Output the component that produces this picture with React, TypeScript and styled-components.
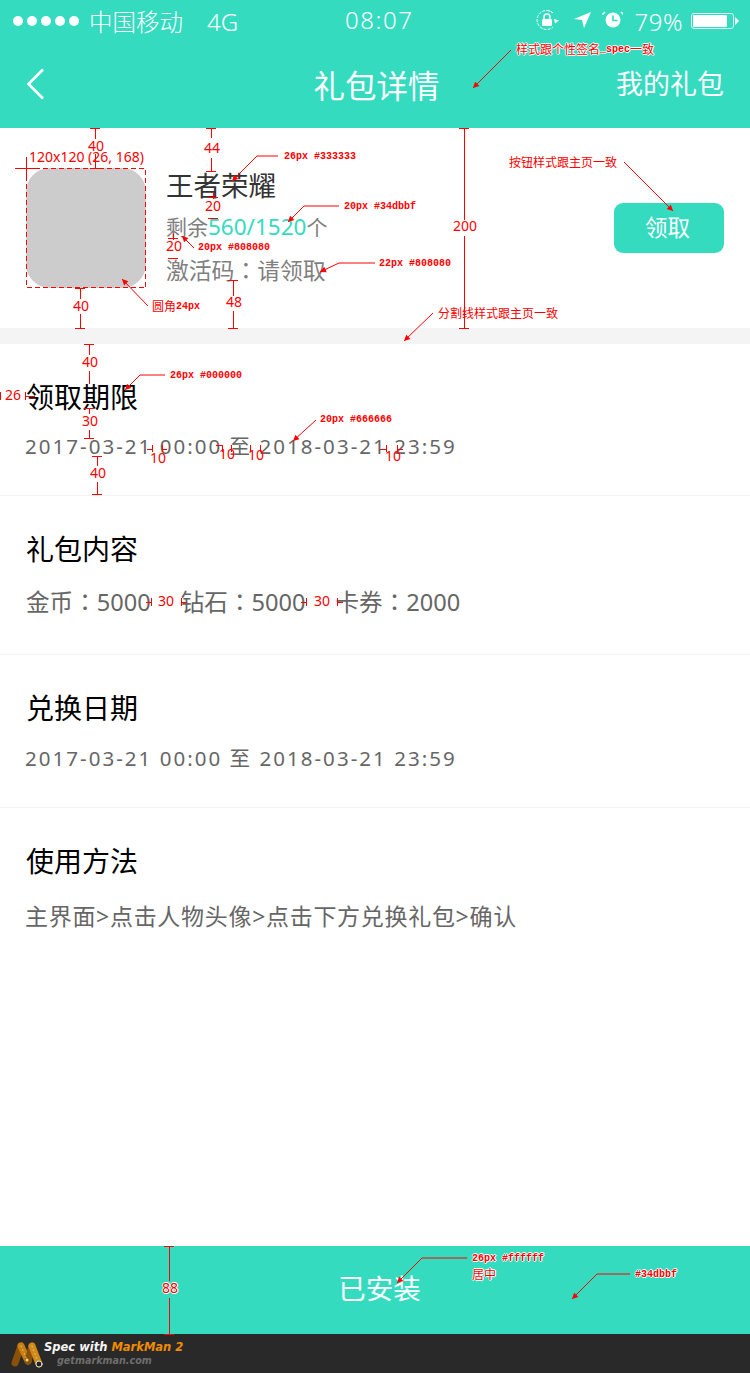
import React from "react";
import styled, { createGlobalStyle } from "styled-components";

const Global = createGlobalStyle`
  html, body { margin: 0; padding: 0; background: #fff; }
  body { font-family: "Noto Sans CJK SC", "Noto Sans", sans-serif; }
`;
const TEAL = "#34dbbf";
const CJK = `"Noto Sans", "Noto Sans CJK SC", sans-serif`;

const Page = styled.div`
  position: relative; width: 750px; height: 1373px; overflow: hidden;
  display: flex; flex-direction: column; font-family: ${CJK}; background: #fff;
`;
const Header = styled.header`height: 128px; background: ${TEAL}; color: #fff; display: flex; flex-direction: column;`;
const StatusBar = styled.div`
  height: 42px; display: flex; align-items: center; justify-content: space-between;
  padding: 0 16px 0 13px; font-size: 24px; font-weight: 300; position: relative;
`;
const StatusGroup = styled.div`display: flex; align-items: center;`;
const Dots = styled.div`display: flex; gap: 4px; margin-right: 10px;`;
const Dot = styled.span`width: 10px; height: 10px; border-radius: 50%; background: #fff;`;
const Carrier = styled.span`margin-right: 24px; font-size: 23.5px;`;
const Clock = styled.span`position: absolute; left: 345px; top: 3px; letter-spacing: 1.6px;`;
const Percent = styled.span`letter-spacing: 0.5px;`;
const StatusIcons = styled.svg`margin-right: 12px;`;
const Battery = styled.div`
  width: 43px; height: 16px; border: 1px solid #d8f8f2; border-radius: 3px; padding: 1px; box-sizing: border-box;
  margin-left: 8px; position: relative;
  &::before { content: ""; display: block; height: 100%; width: 34px; background: #fff; border-radius: 1px; }
  &::after { content: ""; position: absolute; right: -6px; top: 3px; border-left: 4px solid #fff; border-top: 4px solid transparent; border-bottom: 4px solid transparent; }
`;
const Nav = styled.div`flex: 1; display: flex; align-items: center; justify-content: space-between; padding: 0 26px 2px; position: relative;`;
const NavTitle = styled.div`position: absolute; inset: 0 0 2px 3px; display: flex; align-items: center; justify-content: center; font-size: 31.5px;`;
const NavLink = styled.div`font-size: 27px; line-height: 40px;`;

const Hero = styled.section`height: 200px; display: flex; align-items: center; padding: 0 26px; box-sizing: border-box;`;
const Thumb = styled.div`width: 120px; height: 120px; border-radius: 24px; background: #cccccc; flex: none;`;
const Info = styled.div`margin-left: 20px; flex: 1; display: flex; flex-direction: column;`;
const GameName = styled.div`font-size: 27.5px; line-height: 30px; color: #333;`;
const Remain = styled.div`font-size: 21px; line-height: 26px; color: #808080; margin-top: 13px;`;
const Accent = styled.span`color: ${TEAL}; font-size: 22.5px;`;
const Code = styled.div`font-size: 22.8px; line-height: 30px; color: #808080; margin-top: 15px;`;
const ClaimButton = styled.div`
  width: 110px; height: 50px; border-radius: 9px; background: ${TEAL}; color: #fff; font-size: 22.5px;
  display: flex; align-items: center; justify-content: center; box-sizing: border-box; padding: 0 3px 4px 0;
`;
const Divider = styled.div`height: 16px; background: #f4f4f4;`;
const Colon = styled.span`font-family: "Noto Sans CJK TC", sans-serif;`;

const Section = styled.section<{ $h: number; $gap: number }>`
  height: ${(p) => p.$h}px; box-sizing: border-box; padding: 39px 25px 0; border-bottom: 1px solid #f2f2f2;
  display: flex; flex-direction: column; gap: ${(p) => p.$gap}px;
`;
const Last = styled(Section)`border-bottom: none;`;
const SectionTitle = styled.div`font-size: 28px; line-height: 28px; color: #000; padding-left: 1px;`;
const DateText = styled.div`font-size: 20.5px; line-height: 24px; color: #666; letter-spacing: 2.03px; white-space: pre;`;
const Body = styled.div`font-size: 23px; line-height: 24px; color: #666; white-space: pre;`;
const Steps = styled(Body)`letter-spacing: .7px;`;
const Rewards = styled.div`display: flex; gap: 30px; padding-left: 1px;`;
const Reward = styled(Body)`font-size: 23.6px;`;
const Grow = styled.div`flex: 1;`;
const BottomBar = styled.div`
  height: 88px; background: ${TEAL}; color: #fff; font-size: 27.5px; display: flex; align-items: center; justify-content: center;
  box-sizing: border-box; padding: 0 0 6px 9px;
`;
const Marker = styled.div`height: 39px; background: #292929; display: flex; align-items: center; padding-left: 11px; gap: 1px;`;
const MarkerText = styled.div`display: flex; flex-direction: column; font-family: "DejaVu Sans", sans-serif; font-style: italic; font-weight: 700; line-height: 14px;`;
const MarkerTop = styled.div`font-size: 11.5px; color: #f4f4f4; white-space: pre;`;
const Orange = styled.span`color: #f08c00;`;
const MarkerSub = styled.div`font-size: 9.6px; color: #6e6e6e; margin-left: 13px;`;

const Overlay = styled.svg`position: absolute; inset: 0; width: 750px; height: 1373px; pointer-events: none;`;
const Stroke = styled.g`shape-rendering: crispEdges;`;
type Kind = "num" | "spec" | "cn" | "halo" | "haloCn" | "haloNum";
const Note = styled.div<{ $kind: Kind }>`
  position: absolute; color: #f00; white-space: pre; line-height: 1;
  font-size: ${(p) => (p.$kind === "num" || p.$kind === "haloNum" ? 14 : p.$kind === "cn" || p.$kind === "haloCn" ? 12 : 10)}px;
  font-family: ${(p) =>
    p.$kind === "num" || p.$kind === "haloNum"
      ? `"Noto Sans", sans-serif`
      : p.$kind === "cn" || p.$kind === "haloCn"
        ? `"Noto Sans CJK SC", sans-serif`
        : `"Liberation Mono", "Noto Sans CJK SC", monospace`};
  font-weight: ${(p) => (p.$kind === "spec" || p.$kind === "halo" ? 700 : 400)};
  text-shadow: ${(p) => (p.$kind.startsWith("halo") ? "1px 0 #fff,-1px 0 #fff,0 1px #fff,0 -1px #fff" : "none")};
`;

type N = { t: string; x: number; y: number; k: Kind };
const notes: N[] = [
  { t: "样式跟个性签名", x: 516, y: 43, k: "haloCn" },
  { t: "_spec", x: 600, y: 45, k: "halo" },
  { t: "一致", x: 630, y: 43, k: "haloCn" },
  { t: "40", x: 88, y: 139, k: "num" },
  { t: "44", x: 204, y: 141, k: "num" },
  { t: "120x120 (26, 168)", x: 29, y: 150, k: "num" },
  { t: "26px #333333", x: 284, y: 152, k: "spec" },
  { t: "按钮样式跟主页一致", x: 509, y: 156, k: "cn" },
  { t: "20", x: 205, y: 199, k: "num" },
  { t: "20px #34dbbf", x: 344, y: 202, k: "spec" },
  { t: "200", x: 453, y: 219, k: "num" },
  { t: "20", x: 166, y: 239, k: "num" },
  { t: "20px #808080", x: 198, y: 243, k: "spec" },
  { t: "22px #808080", x: 379, y: 259, k: "spec" },
  { t: "48", x: 226, y: 295, k: "num" },
  { t: "40", x: 73, y: 299, k: "num" },
  { t: "圆角", x: 152, y: 300, k: "cn" },
  { t: "24px", x: 176, y: 302, k: "spec" },
  { t: "分割线样式跟主页一致", x: 438, y: 307, k: "cn" },
  { t: "40", x: 82, y: 355, k: "num" },
  { t: "26px #000000", x: 170, y: 371, k: "spec" },
  { t: "26", x: 5, y: 388, k: "num" },
  { t: "20px #666666", x: 320, y: 415, k: "spec" },
  { t: "30", x: 82, y: 414, k: "num" },
  { t: "10", x: 150, y: 451, k: "num" },
  { t: "10", x: 219, y: 447, k: "num" },
  { t: "10", x: 248, y: 448, k: "num" },
  { t: "10", x: 385, y: 449, k: "num" },
  { t: "40", x: 90, y: 466, k: "num" },
  { t: "30", x: 158, y: 594, k: "num" },
  { t: "30", x: 314, y: 594, k: "num" },
  { t: "88", x: 162, y: 1281, k: "haloNum" },
  { t: "26px #ffffff", x: 472, y: 1254, k: "halo" },
  { t: "居中", x: 472, y: 1268, k: "haloCn" },
  { t: "#34dbbf", x: 635, y: 1270, k: "halo" },
];

type L = [number, number, number, number];
const lines: L[] = [
  [95, 128, 95, 139], [95, 154, 95, 168], [90, 128, 100, 128], [90, 168, 100, 168], [15, 168, 40, 168], [26, 157, 26, 180],
  [211, 128, 211, 138], [211, 158, 211, 171], [206, 171, 216, 171], [206, 128, 216, 128],
  [213, 192, 213, 199], [208, 197, 218, 197], [208, 218, 218, 218],
  [173, 234, 173, 240], [168, 238, 178, 238], [168, 258, 178, 258],
  [464, 128, 464, 220], [464, 236, 464, 328], [459, 128, 469, 128], [459, 328, 469, 328],
  [233, 280, 233, 296], [233, 311, 233, 328], [228, 280, 238, 280], [228, 328, 238, 328],
  [80, 288, 80, 299], [80, 314, 80, 328], [75, 288, 85, 288], [75, 328, 85, 328],
  [89, 344, 89, 355], [89, 371, 89, 384], [84, 344, 94, 344],
  [0, 392, 0, 400], [25, 392, 25, 400], [25, 396, 35, 396],
  [89, 408, 89, 414], [89, 430, 89, 438], [84, 438, 94, 438], [84, 408, 94, 408],
  [97, 456, 97, 466], [97, 482, 97, 494], [92, 494, 102, 494], [92, 456, 102, 456],
  [152, 445, 152, 452], [162, 445, 162, 452], [147, 449, 152, 449], [162, 449, 167, 449],
  [222, 445, 222, 452], [231, 445, 231, 452], [216, 445, 222, 445],
  [250, 445, 250, 452], [260, 445, 260, 452],
  [386, 445, 386, 452], [397, 445, 397, 452], [380, 449, 386, 449], [397, 449, 403, 449],
  [151, 598, 151, 606], [146, 602, 151, 602], [181, 598, 181, 606], [181, 602, 187, 602],
  [306, 598, 306, 606], [301, 602, 306, 602], [337, 598, 337, 606], [337, 602, 343, 602],
  [169, 1246, 169, 1281], [169, 1298, 169, 1334], [164, 1246, 174, 1246], [164, 1334, 174, 1334],
];
const arrows: { p: string; tip: [number, number]; from: [number, number] }[] = [
  { p: "511,50 473,88", tip: [473, 88], from: [511, 50] },
  { p: "278,156 257,156 232,181", tip: [232, 181], from: [257, 156] },
  { p: "339,206 304,206 288,222", tip: [288, 222], from: [304, 206] },
  { p: "194,248 182,236", tip: [182, 236], from: [194, 248] },
  { p: "375,263 339,263 320,272", tip: [320, 272], from: [339, 263] },
  { p: "148,306 122,279", tip: [122, 279], from: [148, 306] },
  { p: "624,162 673,211", tip: [673, 211], from: [624, 162] },
  { p: "433,313 404,341", tip: [404, 341], from: [433, 313] },
  { p: "165,375 140,375 125,390", tip: [125, 390], from: [140, 375] },
  { p: "316,420 293,441", tip: [293, 441], from: [316, 420] },
  { p: "467,1258 422,1258 397,1283", tip: [397, 1283], from: [422, 1258] },
  { p: "630,1274 597,1274 572,1299", tip: [572, 1299], from: [597, 1274] },
];

function head(tip: [number, number], from: [number, number]) {
  const a = Math.atan2(tip[1] - from[1], tip[0] - from[0]);
  const pt = (d: number, o: number) => `${tip[0] - d * Math.cos(a) + o * Math.sin(a)},${tip[1] - d * Math.sin(a) - o * Math.cos(a)}`;
  return `${tip[0]},${tip[1]} ${pt(6, 3)} ${pt(6, -3)}`;
}

const Logo = () => (
  <svg width="32" height="28" viewBox="0 0 32 28" fill="none" strokeLinecap="round">
    <path d="M4 23 L10 6" stroke="#8a5208" strokeWidth="7" />
    <path d="M10 6 L17 21" stroke="#c77f14" strokeWidth="7" />
    <path d="M17 21 L21 6" stroke="#8a5208" strokeWidth="7" />
    <path d="M21 6 L28 24" stroke="#d18a1a" strokeWidth="7" />
    <path d="M10 6 L16 20 M21 6 L27 22" stroke="#f3c46a" strokeWidth="1" strokeDasharray="1 3" />
    <circle cx="16" cy="20" r="1.5" fill="#f7d98a" />
    <circle cx="28" cy="24" r="3" fill="#222" stroke="#ddd" strokeWidth="1" />
  </svg>
);

const Status = () => (
  <StatusIcons width="94" height="26" viewBox="0 0 94 26" fill="none">
    <path d="M24 5 A9.5 9.5 0 1 0 24 19" stroke="#fff" strokeWidth="1" strokeDasharray="3 1.2" />
    <path d="M18 2.5 A9.5 9.5 0 0 1 24 5" stroke="#fff" strokeWidth="1" strokeDasharray="3 1.2" />
    <rect x="13" y="11" width="10" height="7" rx="1" fill="#fff" />
    <path d="M15 11 V9 a3 3 0 0 1 6 0 V11" stroke="#fff" strokeWidth="1.4" />
    <path d="M25 11 l5 1.5 -4 3z" fill="#fff" />
    <path d="M45 11 L62 4 L55 20 L53 12z" fill="#fff" />
    <circle cx="84" cy="12" r="7.5" fill="#fff" />
    <path d="M84 7.5 V12.5 H88.5" stroke={TEAL} strokeWidth="1.6" />
    <path d="M76 4 l-2.5 2.5 M92 4 l2.5 2.5" stroke="#fff" strokeWidth="1.6" />
  </StatusIcons>
);

const DATE = "2017-03-21 00:00 至 2018-03-21 23:59";

export default function App() {
  return (
    <Page>
      <Global />
      <Header>
        <StatusBar>
          <StatusGroup>
            <Dots>{[0, 1, 2, 3, 4].map((i) => <Dot key={i} />)}</Dots>
            <Carrier>中国移动</Carrier>
            <span>4G</span>
          </StatusGroup>
          <Clock>08:07</Clock>
          <StatusGroup>
            <Status />
            <Percent>79%</Percent>
            <Battery />
          </StatusGroup>
        </StatusBar>
        <Nav>
          <svg width="20" height="32" viewBox="0 0 20 32" fill="none">
            <path d="M17 1.5 L2.5 16 L17 30.5" stroke="#fff" strokeWidth="2.6" />
          </svg>
          <NavTitle>礼包详情</NavTitle>
          <NavLink>我的礼包</NavLink>
        </Nav>
      </Header>
      <Hero>
        <Thumb />
        <Info>
          <GameName>王者荣耀</GameName>
          <Remain>剩余<Accent>560/1520</Accent>个</Remain>
          <Code>激活码<Colon>：</Colon>请领取</Code>
        </Info>
        <ClaimButton>领取</ClaimButton>
      </Hero>
      <Divider />
      <Section $h={152} $gap={23}>
        <SectionTitle>领取期限</SectionTitle>
        <DateText>{DATE}</DateText>
      </Section>
      <Section $h={159} $gap={26}>
        <SectionTitle>礼包内容</SectionTitle>
        <Rewards>
          <Reward>金币<Colon>：</Colon>5000</Reward>
          <Reward>钻石<Colon>：</Colon>5000</Reward>
          <Reward>卡券<Colon>：</Colon>2000</Reward>
        </Rewards>
      </Section>
      <Section $h={153} $gap={24}>
        <SectionTitle>兑换日期</SectionTitle>
        <DateText>{DATE}</DateText>
      </Section>
      <Last $h={100} $gap={29}>
        <SectionTitle>使用方法</SectionTitle>
        <Steps>主界面&gt;点击人物头像&gt;点击下方兑换礼包&gt;确认</Steps>
      </Last>
      <Grow />
      <BottomBar>已安装</BottomBar>
      <Marker>
        <Logo />
        <MarkerText>
          <MarkerTop>Spec with <Orange>MarkMan 2</Orange></MarkerTop>
          <MarkerSub>getmarkman.com</MarkerSub>
        </MarkerText>
      </Marker>
      <Overlay viewBox="0 0 750 1373" fill="none">
        <Stroke>
          <rect x="26.5" y="168.5" width="119" height="119" stroke="#f00" strokeDasharray="5 3" />
          {lines.map((l, i) => <line key={i} x1={l[0]} y1={l[1]} x2={l[2]} y2={l[3]} stroke="#f00" />)}
        </Stroke>
        {arrows.map((a, i) => (
          <g key={i}>
            <polyline points={a.p} stroke="#f00" />
            <polygon points={head(a.tip, a.from)} fill="#f00" />
          </g>
        ))}
      </Overlay>
      {notes.map((n) => (
        <Note key={n.t + n.x + n.y} $kind={n.k} style={{ left: n.x, top: n.y }}>{n.t}</Note>
      ))}
    </Page>
  );
}
